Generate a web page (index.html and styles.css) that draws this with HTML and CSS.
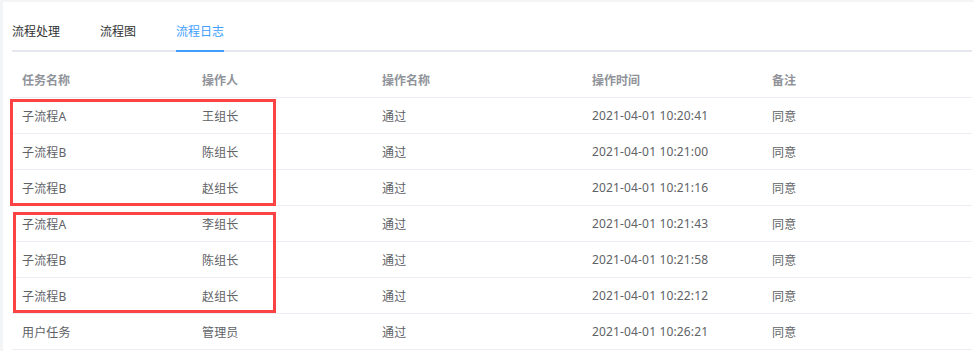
FILE: index.html
```html
<!DOCTYPE html>
<html lang="zh-CN">
<head>
<meta charset="utf-8">
<title>流程日志</title>
<link rel="stylesheet" href="styles.css">
</head>
<body>
<div class="card">
  <div class="tabs">
    <div class="tab"><span class="tab-label">流程处理</span></div>
    <div class="tab"><span class="tab-label">流程图</span></div>
    <div class="tab active"><span class="tab-label">流程日志</span></div>
  </div>
  <div class="table-wrap">
    <table class="log">
      <colgroup>
        <col class="c1"><col class="c2"><col class="c3"><col class="c4"><col class="c5">
      </colgroup>
      <thead>
        <tr><th>任务名称</th><th>操作人</th><th>操作名称</th><th>操作时间</th><th>备注</th></tr>
      </thead>
      <tbody>
        <tr><td>子流程A</td><td>王组长</td><td>通过</td><td>2021-04-01 10:20:41</td><td>同意</td></tr>
        <tr><td>子流程B</td><td>陈组长</td><td>通过</td><td>2021-04-01 10:21:00</td><td>同意</td></tr>
        <tr><td>子流程B</td><td>赵组长</td><td>通过</td><td>2021-04-01 10:21:16</td><td>同意</td></tr>
        <tr><td>子流程A</td><td>李组长</td><td>通过</td><td>2021-04-01 10:21:43</td><td>同意</td></tr>
        <tr><td>子流程B</td><td>陈组长</td><td>通过</td><td>2021-04-01 10:21:58</td><td>同意</td></tr>
        <tr><td>子流程B</td><td>赵组长</td><td>通过</td><td>2021-04-01 10:22:12</td><td>同意</td></tr>
        <tr><td>用户任务</td><td>管理员</td><td>通过</td><td>2021-04-01 10:26:21</td><td>同意</td></tr>
      </tbody>
    </table>
    <div class="mark mark-1"></div>
    <div class="mark mark-2"></div>
  </div>
</div>
</body>
</html>
```

FILE: styles.css
```css
html, body {
  margin: 0;
  padding: 0;
}
body {
  background: #f3f4f6;
  font-family: "Noto Sans", "Noto Sans CJK SC", sans-serif;
  font-size: 12px;
  height: 351px;
  overflow: hidden;
}
.card {
  margin: 2px 0 0 3px;
  background: #fff;
  padding: 10px 2px 0 9px;
  height: 349px;
  box-sizing: border-box;
  overflow: hidden;
}
.tabs {
  display: flex;
  height: 40px;
  box-shadow: inset 0 -2px 0 #e4e7ed;
}
.tab {
  height: 40px;
  padding: 0 20px;
  color: #303133;
  box-sizing: border-box;
}
.tab:first-child { padding-left: 0; }
.tab:last-child { padding-right: 0; }
.tab-label {
  display: block;
  height: 40px;
  line-height: 40px;
  box-sizing: border-box;
}
.tab.active {
  color: #409eff;
}
.tab.active .tab-label {
  border-bottom: 2px solid #409eff;
}
.table-wrap {
  position: relative;
  margin-top: 10px;
}
.log {
  width: 960px;
  border-collapse: collapse;
  table-layout: fixed;
}
.c1 { width: 180px; }
.c2 { width: 180px; }
.c3 { width: 210px; }
.c4 { width: 180px; }
.c5 { width: 210px; }
.log th, .log td {
  height: 35px;
  padding: 0 10px;
  text-align: left;
  border-bottom: 1px solid #ebeef5;
  white-space: nowrap;
}
.log th {
  color: #909399;
  font-weight: bold;
}
.log td {
  color: #606266;
  letter-spacing: 0.15px;
}
.mark {
  position: absolute;
  border: 3px solid #fb4343;
  box-sizing: border-box;
}
.mark-1 {
  top: 37px;
  left: -2px;
  width: 266px;
  height: 107px;
}
.mark-2 {
  top: 150px;
  left: 1px;
  width: 263px;
  height: 101px;
}
```
